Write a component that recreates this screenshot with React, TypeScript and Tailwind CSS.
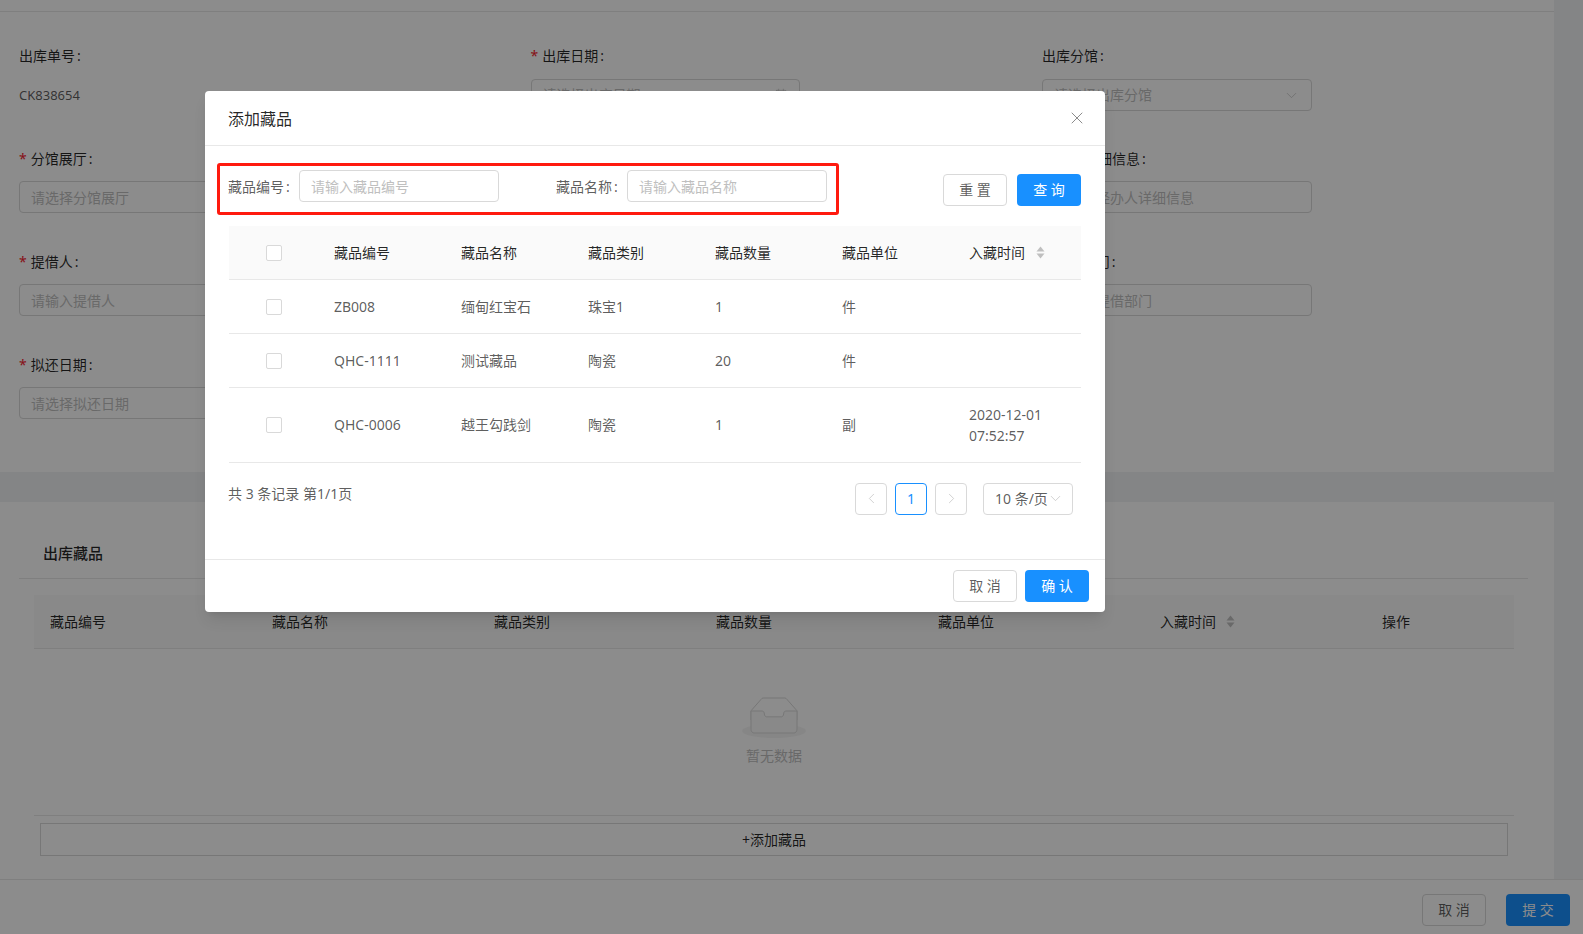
import { ChevronDown, ChevronLeft, ChevronRight, Calendar, X } from "lucide-react";

const fields: any[] = [
  { label: "出库单号", value: "CK838654" },
  { label: "出库日期", required: true, placeholder: "请选择出库日期", icon: "date" },
  { label: "出库分馆", placeholder: "请选择出库分馆", icon: "select" },
  { label: "分馆展厅", required: true, placeholder: "请选择分馆展厅" },
  null,
  { label: "经办人详细信息", placeholder: "请输入经办人详细信息" },
  { label: "提借人", required: true, placeholder: "请输入提借人" },
  null,
  { label: "提借部门", required: true, placeholder: "请选择提借部门" },
  { label: "拟还日期", required: true, placeholder: "请选择拟还日期" },
];

const rows = [
  { code: "ZB008", name: "缅甸红宝石", type: "珠宝1", count: "1", unit: "件", time: "" },
  { code: "QHC-1111", name: "测试藏品", type: "陶瓷", count: "20", unit: "件", time: "" },
  { code: "QHC-0006", name: "越王勾践剑", type: "陶瓷", count: "1", unit: "副", time: "2020-12-01 07:52:57" },
];

function SortIcon() {
  return (
    <svg width="9" height="13" viewBox="0 0 9 13" className="inline-block">
      <path d="M4.5 0.5 L8.5 5.5 H0.5 Z" fill="#bfbfbf" />
      <path d="M4.5 12.5 L8.5 7.5 H0.5 Z" fill="#bfbfbf" />
    </svg>
  );
}

function EmptyIcon() {
  return (
    <svg width="64" height="41" viewBox="0 0 64 41">
      <g transform="translate(0 1)" fill="none" fillRule="evenodd">
        <ellipse fill="#F5F5F5" cx="32" cy="33" rx="32" ry="7" />
        <g fillRule="nonzero" stroke="#D9D9D9">
          <path d="M55 12.76L44.854 1.258C44.367.474 43.656 0 42.907 0H21.093c-.749 0-1.46.474-1.947 1.257L9 12.761V22h46v-9.24z" />
          <path
            d="M41.613 15.931c0-1.605.994-2.93 2.227-2.931H55v18.137C55 33.26 53.68 35 52.05 35h-40.1C10.32 35 9 33.259 9 31.137V13h11.16c1.233 0 2.227 1.323 2.227 2.928v.022c0 1.605 1.005 2.901 2.237 2.901h14.752c1.232 0 2.237-1.308 2.237-2.913v-.007z"
            fill="#FAFAFA"
          />
        </g>
      </g>
    </svg>
  );
}

function Field({ f, first }: { f: any; first: boolean }) {
  if (!f) return <div className="h-[103px]" />;
  return (
    <div className="h-[103px]">
      <div
        className={
          first
            ? "h-[21px] leading-[21px] mb-[13px] text-[rgba(0,0,0,0.85)]"
            : "h-[21px] leading-[21px] mb-[12px] text-[rgba(0,0,0,0.85)]"
        }
      >
        {f.required && <span className="text-[#f5222d] mr-[4px]">*</span>}
        {f.label}
        <span className="ml-[2px]">:</span>
      </div>
      {f.value ? (
        <div className="h-[32px] leading-[32px] text-[13px] text-[rgba(0,0,0,0.65)]">{f.value}</div>
      ) : (
        <div className="w-[269.5px] h-[32px] border border-[#d9d9d9] rounded-[4px] px-[11px] flex items-center justify-between text-[#bfbfbf]">
          <span className={first ? "pb-[2px]" : ""}>{f.placeholder}</span>
          {f.icon === "select" && <ChevronDown size={17} strokeWidth={1} />}
          {f.icon === "date" && <Calendar size={14} strokeWidth={1.2} />}
        </div>
      )}
    </div>
  );
}

function SearchField({ label, placeholder }: { label: string; placeholder: string }) {
  return (
    <div className="flex items-center">
      <span className="text-[rgba(0,0,0,0.65)] w-[71px] -ml-px">
        {label}
        <span className="ml-[2px]">:</span>
      </span>
      <div className="w-[200px] h-[32px] border border-[#d9d9d9] rounded-[4px] px-[11px] flex items-center text-[#bfbfbf]">
        {placeholder}
      </div>
    </div>
  );
}

function PageBtn({ children, active }: { children: React.ReactNode; active?: boolean }) {
  return (
    <div
      className={
        active
          ? "w-[32px] h-[32px] border border-[#1890ff] text-[#1890ff] rounded-[4px] flex items-center justify-center"
          : "w-[32px] h-[32px] border border-[#d9d9d9] text-[#bfbfbf] rounded-[4px] flex items-center justify-center"
      }
    >
      {children}
    </div>
  );
}

function Btn({ children, primary }: { children: React.ReactNode; primary?: boolean }) {
  return (
    <div
      className={
        primary
          ? "w-[64px] h-[32px] pb-[2px] bg-[#1890ff] text-white rounded-[4px] flex items-center justify-center"
          : "w-[64px] h-[32px] pb-[2px] border border-[#d9d9d9] rounded-[4px] flex items-center justify-center"
      }
    >
      {children}
    </div>
  );
}

function Checkbox({ nudge }: { nudge?: boolean }) {
  return (
    <div
      className={
        nudge
          ? "w-[16px] h-[16px] border border-[#d9d9d9] rounded-[2px] bg-white mx-auto translate-y-px"
          : "w-[16px] h-[16px] border border-[#d9d9d9] rounded-[2px] bg-white mx-auto"
      }
    />
  );
}

export default function App() {
  return (
    <div
      className="relative w-[1583px] h-[934px] overflow-hidden bg-white text-[14px] text-[rgba(0,0,0,0.65)] flex flex-col"
      style={{ fontFamily: '"Noto Sans", "Noto Sans CJK SC", sans-serif' }}
    >
      <div className="flex h-[879px]">
        <div className="w-[1554px]">
          <div className="h-[12px] border-b border-[#e8e8e8]" />
          <div className="h-[460px] pl-[19px] pt-[33px] grid grid-cols-[511.5px_511.5px_511.5px] content-start">
            {fields.map((f, i) => (
              <Field key={i} f={f} first={i < 3} />
            ))}
          </div>
          <div className="h-[30px] bg-[#f0f2f5]" />
          <div className="px-[19px]">
            <div className="h-[77px] pt-[41px] pl-[24px] border-b border-[#e8e8e8] mr-[7px] font-medium text-[15px] text-[rgba(0,0,0,0.85)] leading-[21px]">
              出库藏品
            </div>
            <div className="ml-[15px] w-[1480px] mt-[16px]">
              <div className="h-[54px] bg-[#fafafa] border-b border-[#e8e8e8] flex items-center pl-[16px] text-[rgba(0,0,0,0.85)]">
                <span className="w-[222px]">藏品编号</span>
                <span className="w-[222px]">藏品名称</span>
                <span className="w-[222px]">藏品类别</span>
                <span className="w-[222px]">藏品数量</span>
                <span className="w-[222px]">藏品单位</span>
                <span className="w-[222px] flex items-center gap-[10px]">
                  入藏时间 <SortIcon />
                </span>
                <span>操作</span>
              </div>
              <div className="h-[167px] border-b border-[#e8e8e8] flex flex-col items-center pt-[48px]">
                <EmptyIcon />
                <span className="text-[#bfbfbf] mt-[7px] leading-[21px]">暂无数据</span>
              </div>
            </div>
            <div className="ml-[21px] w-[1468px] h-[33px] mt-[7px] border border-[#d9d9d9] flex items-center justify-center text-[rgba(0,0,0,0.85)]">
              +添加藏品
            </div>
          </div>
        </div>
        <div className="flex-1 bg-[#f0f2f5]" />
      </div>

      <div className="flex-1 border-t border-[#e8e8e8] flex justify-end items-start pt-[14px] pr-[13px] gap-[20px]">
        <Btn>取 消</Btn>
        <Btn primary>提 交</Btn>
      </div>

      {/* modal layer */}
      <div className="absolute inset-0 bg-[rgba(0,0,0,0.45)] pl-[205px] pt-[91px]">
        <div className="w-[900px] h-[521px] bg-white rounded-[4px] shadow-lg flex flex-col">
          <div className="h-[55px] border-b border-[#e8e8e8] flex items-center justify-between pl-[23px] pr-[18px]">
            <span className="text-[16px] text-[rgba(0,0,0,0.85)] pt-[1px]">添加藏品</span>
            <X size={20} strokeWidth={1} className="text-[rgba(0,0,0,0.55)]" />
          </div>

          <div className="flex pl-[12px] pt-[17px]">
            <div className="w-[622px] h-[52px] border-[3px] border-[#ff1a0f] rounded-[3px] pl-[9px] pt-[4px] flex items-start gap-[58px]">
              <SearchField label="藏品编号" placeholder="请输入藏品编号" />
              <SearchField label="藏品名称" placeholder="请输入藏品名称" />
            </div>
            <div className="flex gap-[10px] ml-[104px] mt-[11px]">
              <Btn>重 置</Btn>
              <Btn primary>查 询</Btn>
            </div>
          </div>

          <table className="ml-[24px] mt-[11px] w-[852px] table-fixed border-collapse">
            <colgroup>
              <col className="w-[89px]" />
              <col className="w-[127px]" />
              <col className="w-[127px]" />
              <col className="w-[127px]" />
              <col className="w-[127px]" />
              <col className="w-[127px]" />
              <col />
            </colgroup>
            <thead>
              <tr className="h-[53px] bg-[#fafafa] border-b border-[#e8e8e8] text-[rgba(0,0,0,0.85)] text-left">
                <th className="font-normal"><Checkbox nudge /></th>
                <th className="font-normal px-[16px]">藏品编号</th>
                <th className="font-normal px-[16px]">藏品名称</th>
                <th className="font-normal px-[16px]">藏品类别</th>
                <th className="font-normal px-[16px]">藏品数量</th>
                <th className="font-normal px-[16px]">藏品单位</th>
                <th className="font-normal px-[16px]">
                  <span className="flex items-center gap-[11px]">入藏时间 <SortIcon /></span>
                </th>
              </tr>
            </thead>
            <tbody>
              {rows.map((r, i) => (
                <tr key={r.code} className="border-b border-[#e8e8e8] h-[54px]">
                  <td><Checkbox nudge={i < 2} /></td>
                  <td className="px-[16px]">{r.code}</td>
                  <td className="px-[16px]">{r.name}</td>
                  <td className="px-[16px]">{r.type}</td>
                  <td className="px-[16px]">{r.count}</td>
                  <td className="px-[16px]">{r.unit}</td>
                  <td className="px-[16px] py-[16px] leading-[21px]">{r.time}</td>
                </tr>
              ))}
            </tbody>
          </table>

          <div className="flex justify-between items-start ml-[24px] mr-[32px] mt-[20px]">
            <span className="leading-[21px] -ml-px">共 3 条记录 第1/1页</span>
            <div className="flex">
              <div className="flex gap-[8px] mr-[16px]">
                <PageBtn><ChevronLeft size={17} strokeWidth={1} /></PageBtn>
                <PageBtn active>1</PageBtn>
                <PageBtn><ChevronRight size={17} strokeWidth={1} /></PageBtn>
              </div>
              <div className="w-[90px] h-[32px] border border-[#d9d9d9] rounded-[4px] flex items-center pl-[11px]">
                <span className="mr-[-1px]">10 条/页</span>
                <ChevronDown size={17} strokeWidth={1} className="text-[#bfbfbf]" />
              </div>
            </div>
          </div>

          <div className="mt-auto h-[53px] border-t border-[#e8e8e8] flex justify-end items-start pt-[10px] pr-[16px] gap-[8px]">
            <Btn>取 消</Btn>
            <Btn primary>确 认</Btn>
          </div>
        </div>
      </div>
    </div>
  );
}
